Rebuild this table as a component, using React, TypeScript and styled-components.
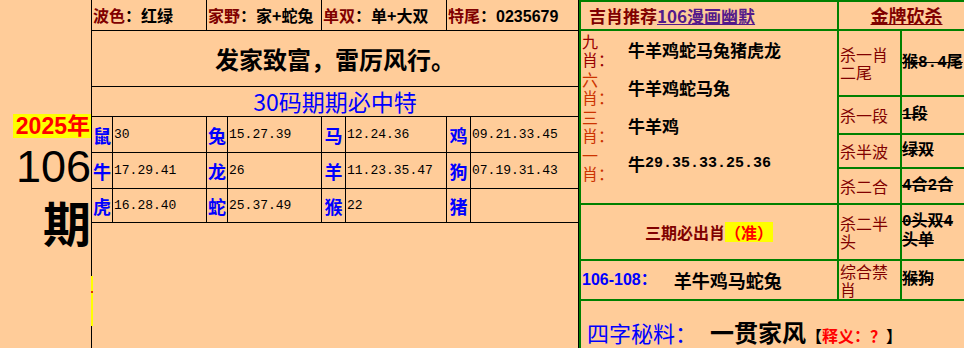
import React from "react";
import styled, { createGlobalStyle } from "styled-components";

const PEACH = "#FFCC99";
const MAROON = "#800000";
const GREEN = "#008000";
const BLUE = "#0000FF";
const CJK = `"Noto Sans CJK SC", sans-serif`;
const MONO = `"Liberation Mono", "Noto Sans CJK SC", monospace`;
const SANS = `"Liberation Sans", "Noto Sans CJK SC", sans-serif`;

const Global = createGlobalStyle`
  html, body { margin: 0; padding: 0; background: ${PEACH}; overflow: hidden; }
  body { font-family: ${CJK}; }
`;

const Page = styled.div`
  display: flex;
  width: 964px;
  height: 348px;
  overflow: hidden;
  background: ${PEACH};
`;

/* ---------- left column ---------- */
const LeftCol = styled.div`
  position: relative;
  flex: none;
  width: 91px;
  border-right: 1px solid #000;
  display: flex;
  flex-direction: column;
  align-items: flex-end;
  padding-top: 114px;
  box-sizing: content-box;
`;
const YearTag = styled.div`
  background: #ffff00;
  color: #ff0000;
  font: bold 23px/24px ${SANS};
  padding: 0 1px 0 3px;
`;
const IssueNo = styled.div`
  margin-top: 9px;
  font: 45px/40px ${SANS};
  color: #000;
`;
const IssueChar = styled.div`
  margin-top: 10px;
  font: bold 48px/48px ${CJK};
  color: #000;
`;
const EdgeMark = styled.div`
  position: absolute;
  right: -2px;
  top: 276px;
  width: 2px;
  height: 50px;
  background: linear-gradient(#ffff00 0 30%, #e03000 30% 34%, #ffff00 34% 100%);
`;

/* ---------- middle ---------- */
const Middle = styled.div`
  flex: none;
  width: 486px;
  border-right: 1px solid #000;
  display: flex;
  flex-direction: column;
`;
const HeadRow = styled.div`
  display: grid;
  grid-template-columns: 114px 114px 124px 131px;
  gap: 1px;
  background: #000;
  border-bottom: 1px solid #000;
`;
const HeadCell = styled.div`
  background: ${PEACH};
  height: 30px;
  font: bold 16px/30px ${CJK};
  color: #000;
  padding-left: 1px;
  white-space: nowrap;
  overflow: hidden;
`;
const Label = styled.span<{ $color?: string }>`
  color: ${(p) => p.$color || MAROON};
`;
const Digits = styled.span`
  font-family: ${SANS};
`;
const Motto = styled.div`
  height: 55px;
  border-bottom: 1px solid #000;
  display: flex;
  align-items: center;
  justify-content: center;
  font: bold 24px/30px ${CJK};
  color: #000;
`;
const Subtitle = styled.div`
  height: 29px;
  border-bottom: 1px solid #000;
  text-align: center;
  font: 23px/29px ${CJK};
  color: ${BLUE};
`;
const ZodiacGrid = styled.div`
  display: grid;
  grid-template-columns: 20px 93px 20px 93px 23px 100px 23px 107px;
  grid-template-rows: 35px 35px 33px;
  gap: 1px;
  background: #000;
  border-bottom: 1px solid #000;
`;
const Animal = styled.div`
  background: ${PEACH};
  display: flex;
  align-items: center;
  justify-content: center;
  font: bold 18px/20px ${CJK};
  color: ${BLUE};
  white-space: nowrap;
`;
const Nums = styled.div`
  background: ${PEACH};
  display: flex;
  align-items: center;
  padding-left: 1px;
  font: 13px/16px ${MONO};
  color: #000;
`;

/* ---------- right ---------- */
const Right = styled.div`
  flex: none;
  display: grid;
  background: ${GREEN};
  gap: 2px;
  padding: 2px 0 0 2px;
  grid-template-columns: 256px 61px 64px;
  grid-template-rows: 27px 64px 36px 32px 34px 54px 38px 60px;
`;
const Cell = styled.div<{ $col?: string; $row?: string; $open?: boolean }>`
  background: ${PEACH};
  grid-column: ${(p) => p.$col || "auto"};
  grid-row: ${(p) => p.$row || "auto"};
  overflow: ${(p) => (p.$open ? "visible" : "hidden")};
`;
const PanelHead = styled(Cell)`
  padding-left: 8px;
  font: bold 17px/27px ${CJK};
  color: ${MAROON};
  white-space: nowrap;
`;
const Link = styled.a`
  color: #551a8b;
  text-decoration: underline;
`;
const KillHead = styled(Cell)`
  padding-left: 8px;
  text-align: center;
  font: bold 18px/27px ${CJK};
  color: ${MAROON};
  text-decoration: underline;
`;
const PickList = styled.div`
  display: grid;
  grid-template-columns: 36px 1fr;
  grid-auto-rows: 38px;
`;
const PickLabel = styled.div<{ $color: string }>`
  padding: 1px 0 0 1px;
  font: 16px/18px ${CJK};
  color: ${(p) => p.$color};
`;
const PickLine = styled.span`
  display: block;
  white-space: nowrap;
`;
const PickValue = styled.div`
  display: flex;
  align-items: center;
  padding-left: 11px;
  font: bold 17px/20px ${CJK};
  color: #000;
  white-space: nowrap;
`;
const PickNum = styled.span`
  font: bold 15px/20px ${MONO};
`;
const KillLabel = styled(Cell)`
  display: flex;
  align-items: center;
  padding-left: 1px;
  font: 16px/18px ${CJK};
  color: ${MAROON};
  overflow: visible;
`;
const KillValue = styled(Cell)`
  display: flex;
  align-items: center;
  font: bold 16px/19px ${MONO};
  color: #000;
  text-decoration: line-through;
`;
const Must = styled(Cell)`
  display: flex;
  align-items: center;
  justify-content: center;
  font: bold 16px/20px ${CJK};
  color: ${MAROON};
`;
const Mark = styled.span`
  background: #ffff00;
  color: #ff0000;
`;
const Range = styled(Cell)`
  display: flex;
  align-items: center;
  padding-left: 1px;
  white-space: nowrap;
`;
const RangeLabel = styled.span`
  font: bold 16px/20px ${SANS};
  color: ${BLUE};
`;
const RangeValue = styled.span`
  margin-left: 17px;
  font: bold 18px/20px ${CJK};
  color: #000;
`;
const Secret = styled(Cell)`
  display: flex;
  align-items: baseline;
  padding: 18px 0 0 6px;
  white-space: nowrap;
`;
const SecretLabel = styled.span`
  font: 22px/26px ${CJK};
  color: ${BLUE};
`;
const SecretWord = styled.span`
  margin-left: 13px;
  font: bold 24px/26px ${CJK};
  color: #000;
`;
const Bracket = styled.span<{ $red?: boolean }>`
  font: bold 16px/26px ${CJK};
  color: ${(p) => (p.$red ? "#ff0000" : "#000")};
`;

const zodiac: [string, string][][] = [
  [["鼠", "30"], ["兔", "15.27.39"], ["马", "12.24.36"], ["鸡", "09.21.33.45"]],
  [["牛", "17.29.41"], ["龙", "26"], ["羊", "11.23.35.47"], ["狗", "07.19.31.43"]],
  [["虎", "16.28.40"], ["蛇", "25.37.49"], ["猴", "22"], ["猪", ""]],
];

const picks: { label: string; color: string; value: React.ReactNode }[] = [
  { label: "九", color: "#990000", value: "牛羊鸡蛇马兔猪虎龙" },
  { label: "六", color: "#CC3300", value: "牛羊鸡蛇马兔" },
  { label: "三", color: "#CC3300", value: "牛羊鸡" },
  { label: "一", color: "#CC3300", value: <>牛<PickNum>29.35.33.25.36</PickNum></> },
];

const kills: [string, string][] = [
  ["杀一肖二尾", "猴8.4尾"],
  ["杀一段", "1段"],
  ["杀半波", "绿双"],
  ["杀二合", "4合2合"],
];

export default function App() {
  return (
    <>
      <Global />
      <Page>
        <LeftCol>
          <YearTag>2025年</YearTag>
          <IssueNo>106</IssueNo>
          <IssueChar>期</IssueChar>
          <EdgeMark />
        </LeftCol>

        <Middle>
          <HeadRow>
            <HeadCell><Label>波色</Label>：红绿</HeadCell>
            <HeadCell><Label>家野</Label>：家+蛇兔</HeadCell>
            <HeadCell><Label>单双</Label>：单+大双</HeadCell>
            <HeadCell><Label>特尾</Label>：<Digits>0235679</Digits></HeadCell>
          </HeadRow>
          <Motto>发家致富，雷厉风行。</Motto>
          <Subtitle>30码期期必中特</Subtitle>
          <ZodiacGrid>
            {zodiac.flat().map(([a, n], i) => (
              <React.Fragment key={i}>
                <Animal>{a}</Animal>
                <Nums>{n}</Nums>
              </React.Fragment>
            ))}
          </ZodiacGrid>
        </Middle>

        <Right>
          <PanelHead $col="1" $row="1">
            吉肖推荐<Link>106漫画幽默</Link>
          </PanelHead>
          <KillHead $col="2 / 4" $row="1">金牌砍杀</KillHead>

          <Cell $col="1" $row="2 / 6" $open>
            <PickList>
              {picks.map((p, i) => (
                <React.Fragment key={i}>
                  <PickLabel $color={p.color}>
                    <PickLine>{p.label}</PickLine>
                    <PickLine>肖：</PickLine>
                  </PickLabel>
                  <PickValue>{p.value}</PickValue>
                </React.Fragment>
              ))}
            </PickList>
          </Cell>
          {kills.map(([l, v], i) => (
            <React.Fragment key={i}>
              <KillLabel $col="2" $row={`${i + 2}`}>{l}</KillLabel>
              <KillValue $col="3" $row={`${i + 2}`}>{v}</KillValue>
            </React.Fragment>
          ))}

          <Must $col="1" $row="6">三期必出肖<Mark>（准）</Mark></Must>
          <KillLabel $col="2" $row="6">杀二半头</KillLabel>
          <KillValue $col="3" $row="6">0头双4头单</KillValue>

          <Range $col="1" $row="7">
            <RangeLabel>106-108：</RangeLabel>
            <RangeValue>羊牛鸡马蛇兔</RangeValue>
          </Range>
          <KillLabel $col="2" $row="7">综合禁肖</KillLabel>
          <KillValue $col="3" $row="7">猴狗</KillValue>

          <Secret $col="1 / 4" $row="8">
            <SecretLabel>四字秘料：</SecretLabel>
            <SecretWord>一贯家风</SecretWord>
            <Bracket>【</Bracket>
            <Bracket $red>释义：？</Bracket>
            <Bracket>】</Bracket>
          </Secret>
        </Right>
      </Page>
    </>
  );
}
